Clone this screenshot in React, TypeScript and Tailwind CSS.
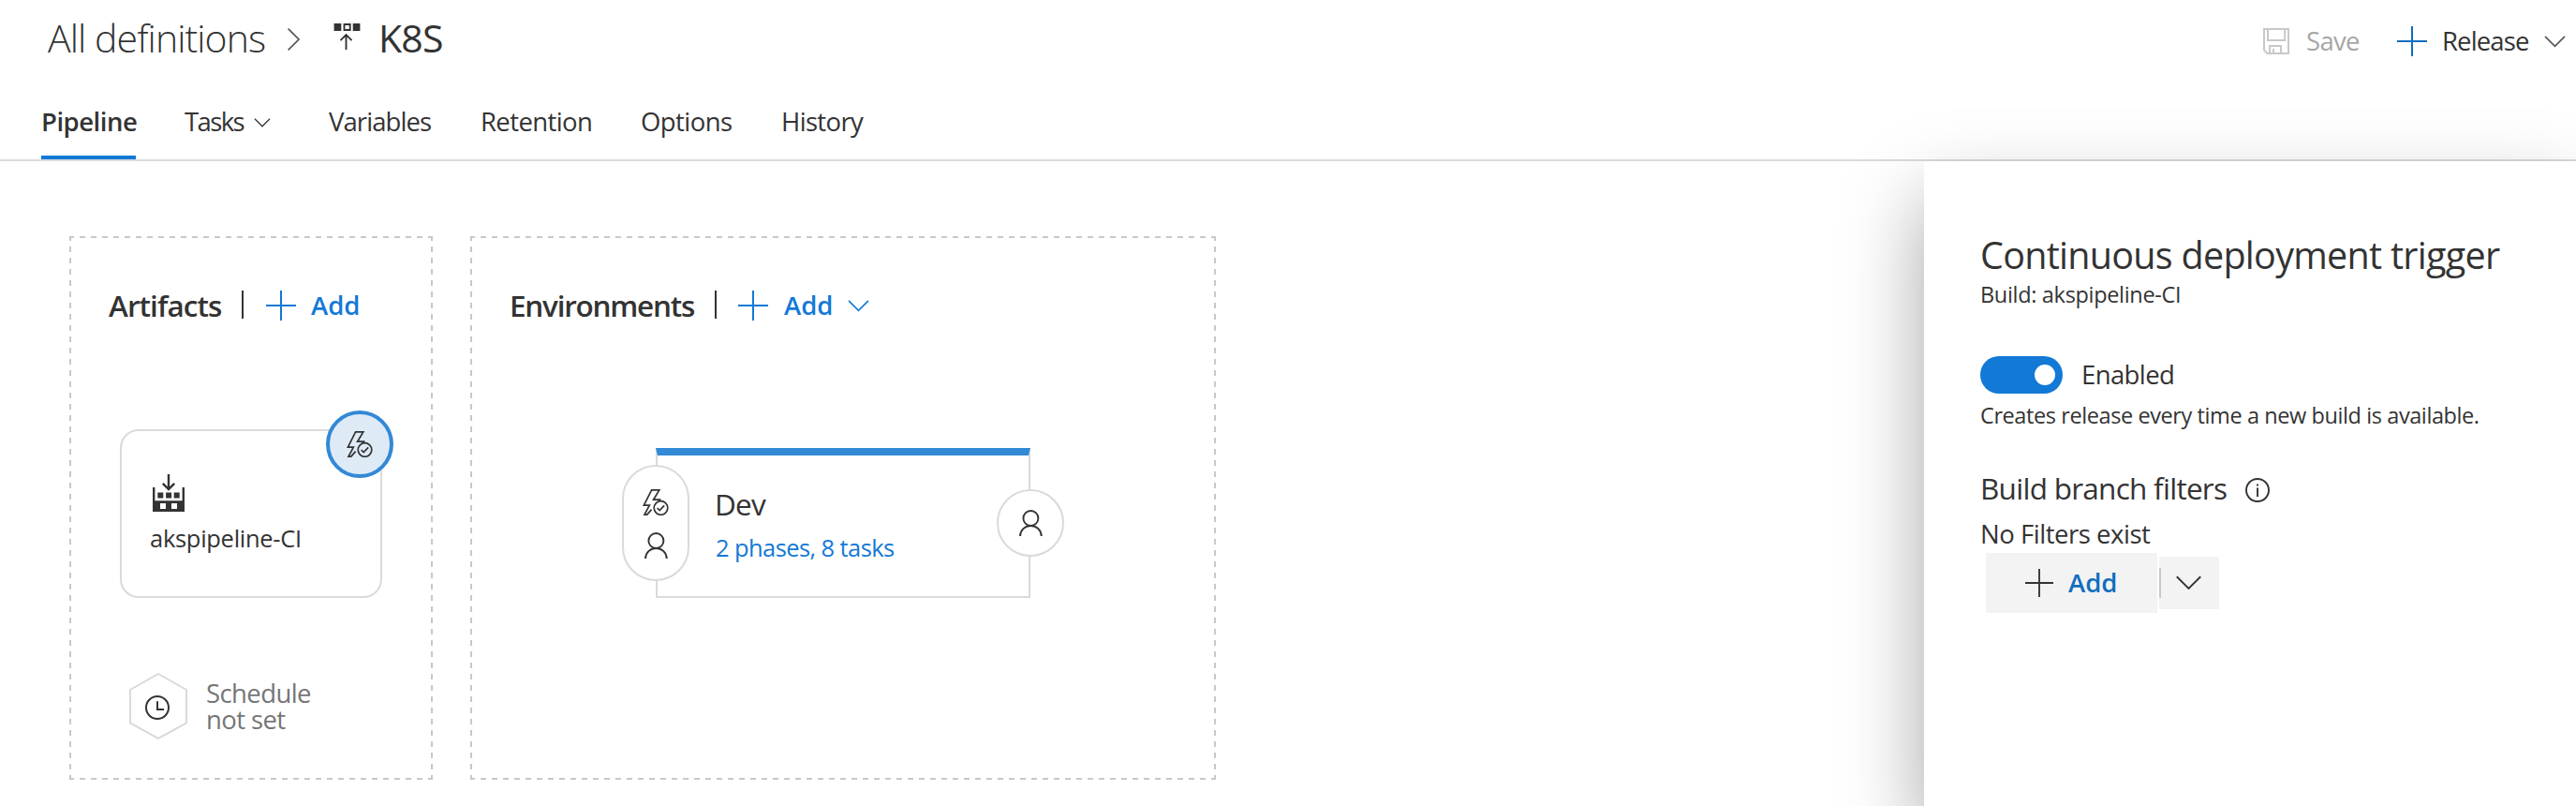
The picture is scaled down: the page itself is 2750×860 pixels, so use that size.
import React from "react";

type IconProps = { className?: string };

const Plus = ({ className = "" }: IconProps) => (
  <svg className={`shrink-0 ${className}`} viewBox="0 0 32 32" fill="none" stroke="currentColor" strokeWidth="2">
    <path d="M16 0V32M0 16H32" />
  </svg>
);

const ChevronDown = ({ className = "" }: IconProps) => (
  <svg className={`shrink-0 ${className}`} viewBox="0 0 24 14" fill="none" stroke="currentColor" strokeWidth="1.7">
    <path d="M.7 1 12 12.3 23.3 1" />
  </svg>
);

const SaveIcon = ({ className = "" }: IconProps) => (
  <svg className={`shrink-0 ${className}`} viewBox="0 0 28 28" fill="none" stroke="currentColor" strokeWidth="2">
    <path d="M1 1H27V27H4.5L1 23.5ZM5 1V13H23.2V1M7 27V19H19V27M11 22V27" />
  </svg>
);

const DeployIcon = ({ className = "" }: IconProps) => (
  <svg className={`shrink-0 ${className}`} viewBox="0 0 29 28" fill="none" stroke="currentColor" strokeWidth="1.9">
    <path d="M.6 0H8.3V8H.6ZM20.7 0H28.4V8H20.7Z" fill="currentColor" stroke="none" />
    <path d="M11.5 1H17.7V7H11.5ZM13.5 28V12.6M7.5 18.2 13.5 12.2 19.5 18.2" />
  </svg>
);

const BuildIcon = ({ className = "" }: IconProps) => (
  <svg className={`shrink-0 ${className}`} viewBox="0 0 34 40" fill="none">
    <path d="M17 0V15.5M10.8 9.8 17 16 23.2 9.8" stroke="currentColor" strokeWidth="2.4" />
    <path
      d="M0 14H2.4V28.3H31.6V14H34V40H0ZM8 31V37H14V31ZM20 31V37H26V31Z"
      fill="currentColor"
      fillRule="evenodd"
    />
    <path d="M5.3 19.6H11.3V25.4H5.3ZM14.1 19.6H20.1V25.4H14.1ZM22.7 19.6H28.7V25.4H22.7Z" fill="currentColor" />
  </svg>
);

const TriggerIcon = ({ className = "" }: IconProps) => (
  <svg className={`shrink-0 ${className}`} viewBox="0 0 28 28" fill="none" stroke="currentColor" strokeWidth="1.7">
    <path d="M19.5 11.2H11.6L17.8 .9H9.6L1.4 17.2H7.4L2 27.1H4.8L9.6 21.6" />
    <circle cx="19.5" cy="20" r="7.3" />
    <path d="M15.6 20 18.2 22.5 23.2 17.4" />
  </svg>
);

const PersonIcon = ({ className = "" }: IconProps) => (
  <svg className={`shrink-0 ${className}`} viewBox="0 0 25 28" fill="none" stroke="currentColor" strokeWidth="1.9">
    <circle cx="12.4" cy="9" r="8" />
    <path d="M1.1 28C1.1 21.7 6.2 17 12.4 17S23.7 21.7 23.7 28" />
  </svg>
);

const Tab = ({ children, className = "" }: { children: React.ReactNode; className?: string }) => (
  <a className={`flex h-[78px] items-center border-b-4 border-transparent pt-[2px] ${className}`}>{children}</a>
);

const Stage = ({ children, className = "" }: { children: React.ReactNode; className?: string }) => (
  <section
    className={`h-[580px] bg-[image:repeating-linear-gradient(90deg,#c8c8c8_0_5px,transparent_5px_11px,#c8c8c8_11px_12px),repeating-linear-gradient(90deg,#c8c8c8_0_5px,transparent_5px_11px,#c8c8c8_11px_12px),repeating-linear-gradient(180deg,#c8c8c8_0_5px,transparent_5px_11px,#c8c8c8_11px_12px),repeating-linear-gradient(180deg,#c8c8c8_0_5px,transparent_5px_11px,#c8c8c8_11px_12px)] bg-[length:100%_2px,100%_2px,2px_100%,2px_100%] bg-[position:top,bottom,left,right] bg-no-repeat px-[2px] pt-[54px] ${className}`}
  >
    {children}
  </section>
);

export default function App() {
  return (
    <div className="flex h-[860px] w-[2750px] flex-col overflow-hidden bg-white font-['Open_Sans','Noto_Sans',sans-serif] whitespace-nowrap text-[#333]">
      <header className="flex h-[92px] shrink-0">
        <div className="flex h-20 items-center pl-[51px]">
          <span className="mt-[2px] w-[256px] text-[41px] font-light tracking-[-0.93px]">All definitions</span>
          <svg className="mt-1 h-6 w-[13px]" viewBox="0 0 13 24" fill="none" stroke="#555" strokeWidth="1.6">
            <path d="M.6 .6 12 12 .6 23.4" />
          </svg>
          <DeployIcon className="-mt-[2px] ml-9 h-7 w-[29px]" />
          <span className="mt-[2px] ml-[19px] text-[41px] tracking-[-0.8px]">K8S</span>
        </div>
        <div className="ml-auto flex h-[88px] w-[334px] items-center text-[27.5px]">
          <SaveIcon className="h-7 w-7 text-[#c8c8c8]" />
          <span className="ml-[18px] w-[57px] tracking-[-0.7px] text-[#a6a6a6]">Save</span>
          <Plus className="ml-10 h-8 w-8 text-[#106ebe]" />
          <span className="ml-4 w-[93px] tracking-[-0.86px]">Release</span>
          <ChevronDown className="ml-4 h-[13px] w-[23px] text-[#555]" />
        </div>
      </header>

      <nav className="flex h-20 shrink-0 gap-[53px] border-b-2 border-[#dadada] pl-11 text-[27.5px]">
        <Tab className="w-[101px] border-[#1379d6]! font-semibold">
          <span className="tracking-[-0.48px]">Pipeline</span>
        </Tab>
        <Tab className="-ml-px w-[101px]">
          <span className="w-[74px] tracking-[-1.6px]">Tasks</span>
          <ChevronDown className="mt-[1px] h-[10px] w-[18px]" />
        </Tab>
        <Tab className="w-[110px] tracking-[-0.92px]">Variables</Tab>
        <Tab className="-ml-px w-[118px] tracking-[-0.6px]">Retention</Tab>
        <Tab className="w-[98px] tracking-[-0.56px]">Options</Tab>
        <Tab className="-ml-px tracking-[-0.65px]">History</Tab>
      </nav>

      <main className="flex h-[688px]">
        <div className="flex flex-1 gap-10 pt-20 pl-[74px]">
          <Stage className="w-[388px]">
            <div className="flex h-10 items-center pl-[40px]">
              <h2 className="w-[142px] text-[31.5px] font-semibold tracking-[-0.93px]">Artifacts</h2>
              <span className="-mt-[2px] h-[30px] w-[2px] bg-[#333]" />
              <button className="ml-6 flex items-center gap-4 text-[27.5px] font-semibold text-[#1379d6]">
                <Plus className="h-8 w-8" />
                <span>Add</span>
              </button>
            </div>
            <div className="relative mt-28 ml-[52px] flex h-[180px] w-[280px] flex-col rounded-[20px] border-2 border-[#dadada] pt-[46px] pl-[30px]">
              <BuildIcon className="ml-[3px] h-10 w-[34px]" />
              <span className="mt-[11px] text-[25.5px] leading-[34px] tracking-[-0.29px]">akspipeline-CI</span>
              <span className="absolute -top-[22px] -right-[14px] flex size-[72px] items-center justify-center rounded-full border-4 border-[#3289d6] bg-[#deebf7]">
                <TriggerIcon className="-ml-[1px] size-7" />
              </span>
            </div>
            <div className="mt-20 ml-[62px] flex h-[71px] items-center">
              <div className="grid h-[71px] w-[62px] place-items-center">
                <svg className="col-start-1 row-start-1 h-[71px] w-[62px]" viewBox="0 0 62 71" fill="none" stroke="#dadada" strokeWidth="2">
                  <path d="M31 1 61 18V53.5L31 70 1 53.5V18Z" />
                </svg>
                <svg className="col-start-1 row-start-1 mt-[2px] mr-[2px] size-[26px]" viewBox="0 0 26 26" fill="none" stroke="#333" strokeWidth="2">
                  <circle cx="13" cy="13" r="12" />
                  <path d="M13 6.2V15H20" />
                </svg>
              </div>
              <p className="ml-5 text-[27.5px] leading-7 tracking-[-0.6px] text-[#767676]">
                Schedule
                <br />
                not set
              </p>
            </div>
          </Stage>

          <Stage className="w-[796px]">
            <div className="flex h-10 items-center pl-[40px]">
              <h2 className="w-[219px] text-[31.5px] font-semibold tracking-[-1.25px]">Environments</h2>
              <span className="-mt-[2px] h-[30px] w-[2px] bg-[#333]" />
              <button className="ml-[23px] flex items-center text-left text-[27.5px] font-semibold text-[#1379d6]">
                <Plus className="h-8 w-8" />
                <span className="ml-[17px] w-[68px]">Add</span>
                <ChevronDown className="h-[13px] w-[23px]" />
              </button>
            </div>
            <div className="relative mt-[132px] ml-[196px] flex h-40 w-[400px] flex-col border-2 border-t-8 border-[#dadada] border-t-[#3289d6] pt-[31px] pl-[61px]">
              <span className="text-[31.5px] leading-[42px] tracking-[-0.77px]">Dev</span>
              <span className="mt-2 ml-px text-[25.5px] leading-[34px] tracking-[-0.59px] text-[#1379d6]">2 phases, 8 tasks</span>
              <span className="absolute top-[10px] -left-[38px] flex h-[124px] w-[72px] flex-col items-center gap-[18px] rounded-full border-2 border-[#dadada] bg-white pt-6">
                <TriggerIcon className="size-7" />
                <PersonIcon className="h-7 w-[25px]" />
              </span>
              <span className="absolute top-9 -right-[38px] flex size-[72px] items-center justify-center rounded-full border-2 border-[#dadada] bg-white">
                <PersonIcon className="h-7 w-[25px]" />
              </span>
            </div>
          </Stage>
        </div>

        <aside className="relative w-[696px] bg-white pt-[73px] pl-[60px] shadow-[0_40px_80px_rgba(0,0,0,0.35)]">
          <h1 className="text-[39.5px] leading-[54px] tracking-[-0.72px]">Continuous deployment trigger</h1>
          <p className="text-[23.5px] leading-[30px] tracking-[-0.32px]">Build: akspipeline-CI</p>
          <div className="mt-[51px] flex h-10 items-center">
            <span className="flex h-10 w-[88px] items-center justify-end rounded-full bg-[#1379d6] pr-2">
              <span className="size-[22px] rounded-full bg-white" />
            </span>
            <span className="ml-5 text-[27.5px] tracking-[-0.61px]">Enabled</span>
          </div>
          <p className="text-[23.5px] leading-[46px] tracking-[-0.41px]">Creates release every time a new build is available.</p>
          <div className="mt-[35px] flex h-10 items-center">
            <h3 className="w-[283px] text-[31.5px] tracking-[-0.73px]">Build branch filters</h3>
            <svg className="mt-[4px] size-[26px]" viewBox="0 0 26 26" fill="none" stroke="#333" strokeWidth="1.9">
              <circle cx="13" cy="13" r="12" />
              <path d="M13 10.6V20M13 6.4V8.6" />
            </svg>
          </div>
          <p className="mt-2 mb-[-1px] text-[27.5px] leading-[42px] tracking-[-0.47px]">No Filters exist</p>
          <div className="ml-[6px] flex items-center gap-[2px]">
            <button className="flex h-16 w-[183px] items-center bg-[#f3f3f3] pl-[42px] text-[27.5px] font-semibold text-[#106ebe]">
              <Plus className="size-[30px] text-[#333]" />
              <span className="ml-4">Add</span>
            </button>
            <button className="flex h-14 w-16 items-center bg-[#f3f3f3]">
              <span className="h-8 w-[2px] bg-[#c8c8c8]" />
              <ChevronDown className="ml-4 h-[16px] w-[27px] text-[#333]" />
            </button>
          </div>
        </aside>
      </main>
    </div>
  );
}
